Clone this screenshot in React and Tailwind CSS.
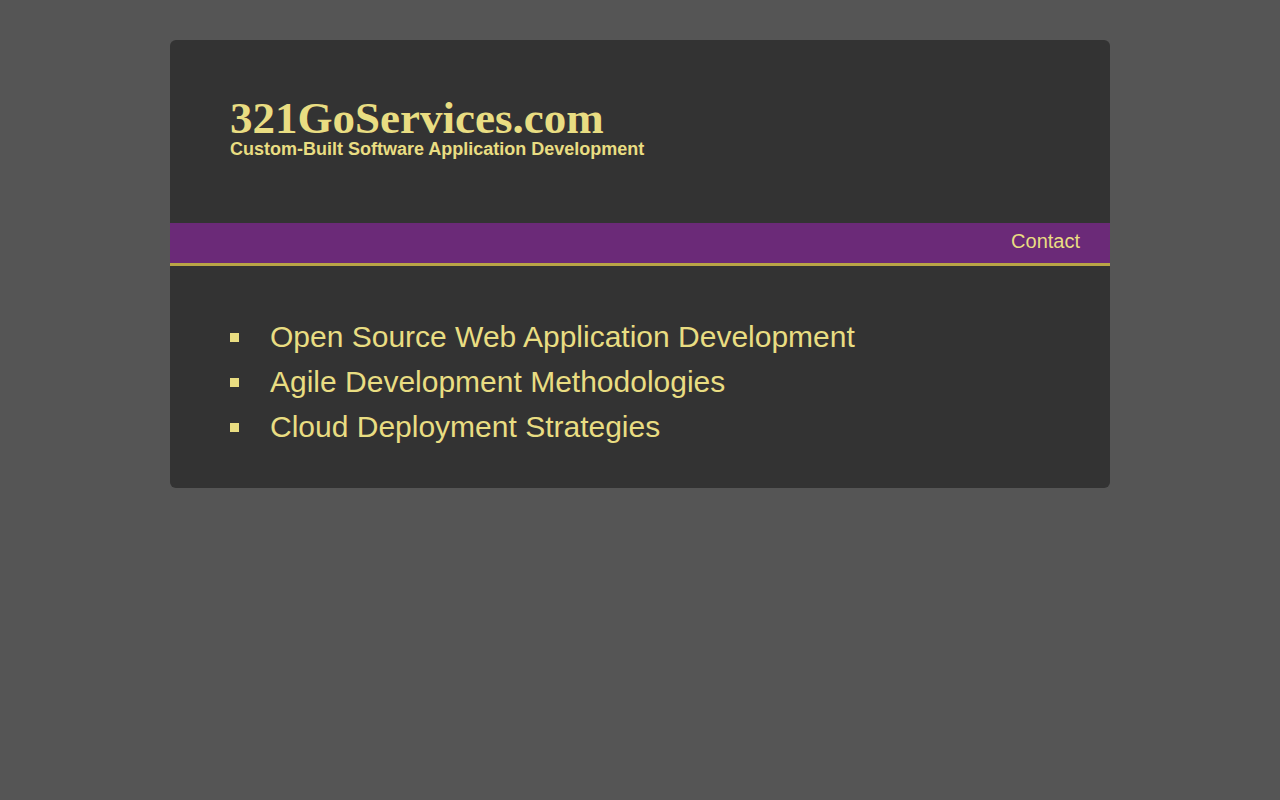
const items = [
  'Open Source Web Application Development',
  'Agile Development Methodologies',
  'Cloud Deployment Strategies',
];

export default function App() {
  return (
    <div className="min-h-screen bg-[#555555] pt-10 font-['Liberation_Sans',Arial,sans-serif]">
      <div className="mx-auto w-[940px] rounded-md bg-[#333333] text-[#e9dd82]">
        <header className="h-[183px] px-[60px] pt-[56px]">
          <h1 className="font-['Liberation_Serif','Times_New_Roman',serif] text-[45px] font-bold leading-[44px]">
            321GoServices.com
          </h1>
          <p className="text-[18px] font-bold leading-[18px]">Custom-Built Software Application Development</p>
        </header>
        <nav className="flex h-[43px] items-center justify-end border-b-[3px] border-[#b9a546] bg-[#6b2a78] px-[30px] pb-[5px]">
          <a href="#" className="text-[20px]">Contact</a>
        </nav>
        <ul className="px-[60px] pt-[48px] pb-[39px]">
          {items.map((t) => (
            <li key={t} className="flex h-[45px] items-center text-[30px]">
              <span className="mr-[31px] mt-[2px] h-[9px] w-[9px] bg-[#e9dd82]" />
              {t}
            </li>
          ))}
        </ul>
      </div>
    </div>
  );
}
